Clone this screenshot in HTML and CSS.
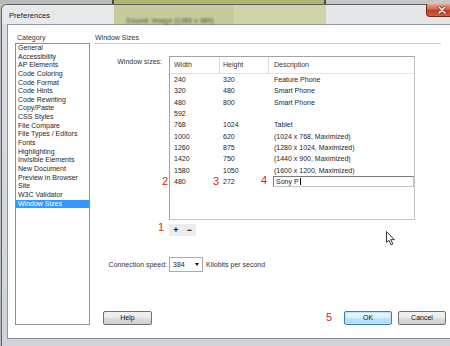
FILE: index.html
```html
<!DOCTYPE html>
<html lang="en">
<head>
  <meta charset="UTF-8">
  <title>Preferences</title>
  <link rel="stylesheet" href="styles.css">
</head>
<body>
  <!-- Dialog window -->
  <div class="window">
    <div class="titlebar">
      <span class="title">Preferences</span>
      <span class="desk-text">Sound: Image (1280 x 960)</span>
      <div class="close">
        <svg width="12" height="8" viewBox="0 0 12 8">
          <path d="M3 1 L9 7 M9 1 L3 7" stroke="#6b2a1c" stroke-width="3" stroke-linecap="round"/>
          <path d="M3 1 L9 7 M9 1 L3 7" stroke="#fff" stroke-width="1.6" stroke-linecap="round"/>
        </svg>
      </div>
    </div>

    <div class="client">
      <!-- Category list -->
      <div class="cat-col">
        <div class="cat-label">Category</div>
        <ul class="cat-list">
          <li>General</li>
          <li>Accessibility</li>
          <li>AP Elements</li>
          <li>Code Coloring</li>
          <li>Code Format</li>
          <li>Code Hints</li>
          <li>Code Rewriting</li>
          <li>Copy/Paste</li>
          <li>CSS Styles</li>
          <li>File Compare</li>
          <li>File Types / Editors</li>
          <li>Fonts</li>
          <li>Highlighting</li>
          <li>Invisible Elements</li>
          <li>New Document</li>
          <li>Preview in Browser</li>
          <li>Site</li>
          <li>W3C Validator</li>
          <li class="selected">Window Sizes</li>
        </ul>
      </div>

      <!-- Window Sizes panel -->
      <div class="main-col">
        <div class="section-title">Window Sizes</div>

        <div class="sizes-row">
          <div class="field-label">Window sizes:</div>
          <div class="sizes-block">
            <div class="grid">
              <div class="grid-head">
                <div class="cell c1">Width</div>
                <div class="cell c2">Height</div>
                <div class="cell c3">Description</div>
              </div>
              <div class="grid-row"><div class="cell c1">240</div><div class="cell c2">320</div><div class="cell c3">Feature Phone</div></div>
              <div class="grid-row"><div class="cell c1">320</div><div class="cell c2">480</div><div class="cell c3">Smart Phone</div></div>
              <div class="grid-row"><div class="cell c1">480</div><div class="cell c2">800</div><div class="cell c3">Smart Phone</div></div>
              <div class="grid-row"><div class="cell c1">592</div><div class="cell c2"></div><div class="cell c3"></div></div>
              <div class="grid-row"><div class="cell c1">768</div><div class="cell c2">1024</div><div class="cell c3">Tablet</div></div>
              <div class="grid-row"><div class="cell c1">1000</div><div class="cell c2">620</div><div class="cell c3">(1024 x 768, Maximized)</div></div>
              <div class="grid-row"><div class="cell c1">1260</div><div class="cell c2">875</div><div class="cell c3">(1280 x 1024, Maximized)</div></div>
              <div class="grid-row"><div class="cell c1">1420</div><div class="cell c2">750</div><div class="cell c3">(1440 x 900, Maximized)</div></div>
              <div class="grid-row"><div class="cell c1">1580</div><div class="cell c2">1050</div><div class="cell c3">(1600 x 1200, Maximized)</div></div>
              <div class="grid-row"><div class="cell c1">480</div><div class="cell c2">272</div><div class="cell c3 edit"><span class="edit-box">Sony P<span class="caret"></span></span></div></div>
            </div>
            <div class="pm">
              <span class="pm-btn">+</span>
              <span class="pm-btn">&minus;</span>
            </div>
          </div>
        </div>

        <div class="speed-row">
          <div class="speed-label">Connection speed:</div>
          <div class="select">
            <span>384</span>
            <span class="arrow"></span>
          </div>
          <span class="speed-unit">Kilobits per second</span>
        </div>

        <div class="buttons">
          <div class="btn help">Help</div>
          <div class="btn ok">OK</div>
          <div class="btn cancel">Cancel</div>
        </div>
      </div>
    </div>
  </div>

  <!-- Red step annotations -->
  <span class="mark m1">1</span>
  <span class="mark m2">2</span>
  <span class="mark m3">3</span>
  <span class="mark m4">4</span>
  <span class="mark m5">5</span>

  <!-- Mouse pointer -->
  <svg class="cursor" width="11" height="15" viewBox="0 0 11 15">
    <path d="M0.5 0.5 L0.5 11.5 L3 9.2 L5 13.8 L6.8 13 L4.9 8.6 L8.3 8.6 Z" fill="#fff" stroke="#222" stroke-width="0.9" stroke-linejoin="round"/>
  </svg>
</body>
</html>
```

FILE: styles.css
```css
html, body {
  margin: 0;
  padding: 0;
}

body {
  width: 450px;
  height: 346px;
  overflow: hidden;
  position: relative;
  font-family: "Liberation Sans", Arial, sans-serif;
  font-size: 7px;
  color: #1e1e1e;
  background: linear-gradient(to right, #b9bbb9 0, #b9bbb9 112px, #4a4b40 112px, #4a4b40 114px, #b3b46e 114px, #b3b46e 324px, #4a4b40 324px, #4a4b40 326px, #c6c7c6 326px);
}

.window {
  margin: 4px 0 0 1px;
  width: 446px;
  height: 339px;
  border: 1px solid #5c6168;
  border-bottom-color: #3f4247;
  border-radius: 6px 6px 0 0;
  padding: 0 5px 5px 5px;
  background: linear-gradient(#d9dde2, #cfd4da);
  display: flex;
  flex-direction: column;
  position: relative;
}

/* Title bar */
.titlebar {
  height: 19px;
  margin: 0 -5px;
  padding: 0 7px;
  border-radius: 5px 5px 0 0;
  position: relative;
  background: linear-gradient(to right, #e6e8ea 0, #e6e8ea 112px, #c8cb9c 112px, #c8cb9c 232px, #d1d3a9 232px, #d1d3a9 324px, #e4e6e8 324px);
}

.title {
  display: block;
  font-size: 7.6px;
  line-height: 21px;
  color: #1a1a1a;
}

.desk-text {
  position: absolute;
  left: 124px;
  top: 12px;
  font-size: 7px;
  font-weight: bold;
  color: #6d704a;
  filter: blur(0.9px);
}

.close {
  position: absolute;
  right: 1px;
  top: -1px;
  width: 31px;
  height: 13px;
  border: 1px solid #6e2a1c;
  border-top: none;
  border-radius: 0 0 4px 4px;
  background: linear-gradient(#e7a595, #d25a3f 50%, #c13a22 51%, #d2603e);
  display: flex;
  align-items: center;
  justify-content: center;
  box-sizing: border-box;
}

/* White client area */
.client {
  height: 315px;
  box-sizing: border-box;
  border: 1px solid #8e959e;
  background: #fff;
  padding: 7px 6px 13px 7px;
  display: flex;
  gap: 5px;
}

.cat-col {
  width: 75px;
  display: flex;
  flex-direction: column;
}

.cat-label {
  line-height: 11px;
  padding-left: 2px;
  color: #333;
}

.cat-list {
  list-style: none;
  margin: 0;
  padding: 0;
  height: 282px;
  box-sizing: border-box;
  border: 1px solid #8a8f96;
}

.cat-list li {
  line-height: 8.65px;
  height: 8.65px;
  padding-left: 2px;
  white-space: nowrap;
}

.cat-list li.selected {
  background: #3399ff;
  color: #fff;
}

.main-col {
  flex: 1;
  display: flex;
  flex-direction: column;
}

.section-title {
  line-height: 11px;
  margin-right: 5px;
  border-bottom: 1px solid #c9c9c9;
  color: #333;
}

.sizes-row {
  margin-top: 12px;
  display: flex;
  gap: 7px;
}

.field-label {
  width: 67px;
  text-align: right;
  line-height: 10px;
  padding-top: 1px;
  color: #333;
}

.sizes-block {
  display: flex;
  flex-direction: column;
}

.grid {
  width: 246px;
  height: 164px;
  box-sizing: border-box;
  border: 1px solid #a3a3a3;
  border-right-color: #c4c4c4;
  border-bottom-color: #c4c4c4;
}

.grid-head,
.grid-row {
  display: grid;
  grid-template-columns: 50px 49px 1fr;
}

.grid-head {
  height: 16px;
  line-height: 16px;
  border-bottom: 1px solid #e3e3e3;
  color: #333;
}

.grid-head .c1,
.grid-head .c2 {
  border-right: 1px solid #dadada;
}

.grid-row {
  height: 11.33px;
  line-height: 11.33px;
}

.cell {
  white-space: nowrap;
  overflow: hidden;
}

.c1 { padding-left: 4px; }
.c2 { padding-left: 3px; }
.c3 { padding-left: 5px; }

.grid-head .c2 { padding-left: 3px; }

.cell.edit {
  padding-left: 4px;
  display: flex;
  align-items: center;
}

.edit-box {
  flex: 1;
  height: 11px;
  box-sizing: border-box;
  border: 1px solid #7b7b7b;
  border-right-color: #c2c2c2;
  border-bottom-color: #c2c2c2;
  line-height: 9px;
  padding-left: 2px;
  display: flex;
  align-items: center;
}

.caret {
  display: inline-block;
  width: 1px;
  height: 7px;
  margin-left: 1px;
  background: #000;
}

.pm {
  margin-top: 4px;
  display: flex;
}

.pm-btn {
  width: 14px;
  height: 12px;
  line-height: 12px;
  text-align: center;
  background: #ececec;
  font-size: 9px;
  font-weight: bold;
  color: #111;
}

.pm-btn + .pm-btn {
  width: 13px;
}

.speed-row {
  margin-top: 21px;
  display: flex;
  align-items: center;
}

.speed-label {
  width: 72px;
  text-align: right;
  color: #333;
}

.select {
  margin-left: 2px;
  width: 34px;
  height: 15px;
  box-sizing: border-box;
  border: 1px solid #ababab;
  display: flex;
  align-items: center;
  justify-content: space-between;
  padding: 0 3px 0 3px;
}

.arrow {
  width: 0;
  height: 0;
  border-left: 2.5px solid transparent;
  border-right: 2.5px solid transparent;
  border-top: 3px solid #111;
}

.speed-unit {
  margin-left: 3px;
  color: #333;
}

.buttons {
  margin-top: auto;
  display: flex;
  gap: 6px;
}

.btn {
  height: 14px;
  width: 48px;
  box-sizing: border-box;
  border: 1px solid #707070;
  border-radius: 2px;
  text-align: center;
  line-height: 12px;
  background: linear-gradient(#f2f2f2, #ebebeb 50%, #dddddd 51%, #cfcfcf);
  color: #111;
}

.btn.help {
  width: 49px;
  margin-left: 8px;
  margin-right: auto;
}

.btn.ok {
  border-color: #3c7fb1;
  background: linear-gradient(#eaf6fd, #d9f0fc 50%, #bee6fd 51%, #a7d9f5);
  box-shadow: inset 0 0 0 1px #bfe3f7;
}

/* Annotations */
.mark {
  position: absolute;
  font-size: 11px;
  line-height: 11px;
  color: #e4211c;
}

.m1 { left: 158px; top: 222px; }
.m2 { left: 162px; top: 176px; }
.m3 { left: 213px; top: 176px; }
.m4 { left: 261px; top: 175px; }
.m5 { left: 326px; top: 312px; }

.cursor {
  position: absolute;
  left: 386px;
  top: 231px;
}
```
